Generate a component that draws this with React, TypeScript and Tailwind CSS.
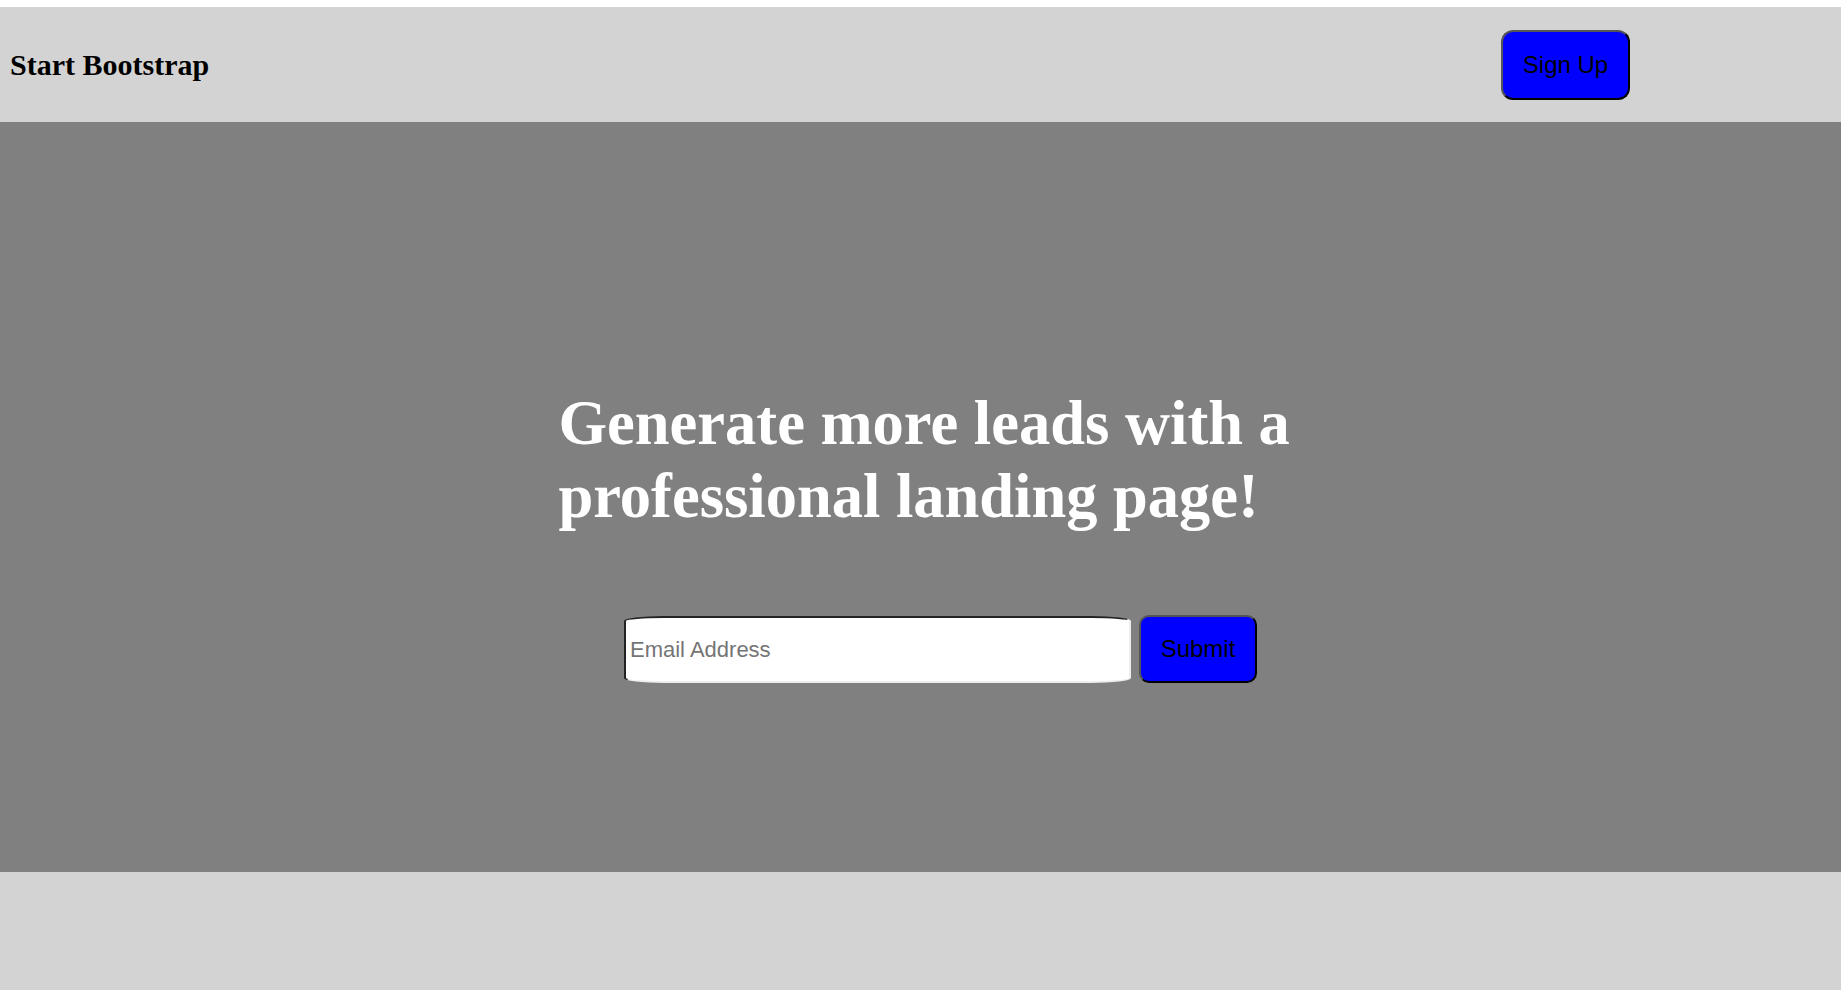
import React from "react";

export default function App() {
  return (
    <div className="min-h-screen bg-white pt-[7px]">
      <nav className="flex h-[115px] items-center justify-between bg-[#d3d3d3] pl-[10px] pr-[211px]">
        <div className="font-['Liberation_Serif','Times_New_Roman',serif] text-[30px] font-bold leading-none text-black">
          Start Bootstrap
        </div>
        <button className="h-[70px] w-[129px] rounded-[12px] border-2 border-b-black border-l-[#555] border-r-black border-t-[#555] bg-[#0000ff] font-['Liberation_Sans',Arial,sans-serif] text-[24px] text-black">
          Sign Up
        </button>
      </nav>
      <section className="h-[750px] bg-[#808080] pt-[265px]">
        <div className="mx-auto w-[760px] pl-[18px]">
          <h1 className="font-['Liberation_Serif','Times_New_Roman',serif] text-[62.5px] font-bold leading-[73px] text-white">
            Generate more leads with a professional landing page!
          </h1>
        </div>
        <div className="mt-[83px] flex justify-center gap-[8px] pl-[40px]">
          <input
            type="email"
            placeholder="Email Address"
            className="h-[67px] w-[507px] rounded-[40px_/_5px] border-2 border-b-[#eeeeee] border-l-[#222222] border-r-[#eeeeee] border-t-[#222222] bg-white px-[4px] font-['Liberation_Sans',Arial,sans-serif] text-[22px] text-black outline-none placeholder:text-[#757575]"
          />
          <button className="-mt-[1px] h-[68px] w-[118px] rounded-[10px] border-2 border-b-black border-l-[#555] border-r-black border-t-[#555] bg-[#0000ff] font-['Liberation_Sans',Arial,sans-serif] text-[24px] text-black">
            Submit
          </button>
        </div>
      </section>
      <footer className="h-[118px] bg-[#d3d3d3]" />
    </div>
  );
}
